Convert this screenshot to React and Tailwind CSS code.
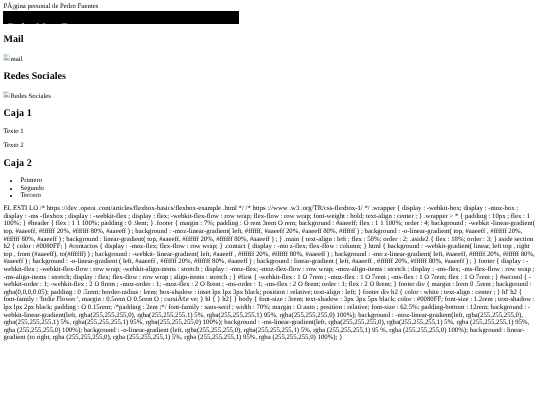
const cssText = `EL ESTI LO /* https ://dev .opera .com/articles/flexbox-basics/flexbox-example .html */ /* https ://www .w3 .org/TR/css-flexbox-1/ */ .wrapper { display : -webkit-box; display : -moz-box ; display : -ms -flexbox ; display : -webkit-flex ; display : flex; -webkit-flex-flow : row wrap; flex-flow : row wrap; font-weight : bold; text-align : center ; } .wrapper > * { padding : 10px ; flex : 1 100%; } #header { flex : 1 1 100%; padding : 0 .9em; } .footer { margin : 7%; padding : O rem 3rem O rem; background : #aaeeff; flex : 1 1 100%; order : 4; background : -webkit -linear-gradient( top, #aaeeff, #ffffff 20%, #ffffff 80%, #aaeeff ) ; background : -moz-linear-gradient( left, #ffffff, #aaeeff 20%, #aaeeff 80%, #ffffff ) ; background : -o-linear-gradient( top, #aaeeff , #ffffff 20%, #ffffff 80%, #aaeeff ) ; background : linear-gradient( top, #aaeeff, #ffffff 20%, #ffffff 80%, #aaeeff ) ; } .main { text-align : left ; flex : 58%; order : 2; .aside2 { flex : 18%; order : 3; } aside section h2 { color : #0080FF; } #contactos { display : -moz-flex; flex-flow : row wrap; } .contact { display : -mo z-flex; flex-flow : column; } html { background : -webkit-gradient( linear, left top , right top , from (#aaeeff), to(#ffffff) ) ; background : -webkit- linear-gradient( left, #aaeeff , #ffffff 20%, #ffffff 80%, #aaeeff ) ; background : -mo z-linear-gradient( left, #aaeeff, #ffffff 20%, #ffffff 80%, #aaeeff ) ; background : -o-linear-gradient ( left, #aaeeff , #ffffff 20%, #ffffff 80%, #aaeeff ) ; background : linear-gradient ( left, #aaeeff , #ffffff 20%, #ffffff 80%, #aaeeff ) ; } footer { display : -webkit-flex ; -webkit-flex-flow : row wrap; -webkit-align-items : stretch ; display : -moz-flex; -moz-flex-flow : row wrap; -moz-align-items : stretch ; display : -ms-flex; -ms-flex-flow : row wrap ; -ms-align-items : stretch; display : flex; flex-flow : row wrap ; align-items : stretch ; } #first { -webkit-flex : 1 O 7rem ; -moz-flex : 1 O 7rem ; -ms-flex : 1 O 7rem; flex : 1 O 7rem ; } #second { -webkit-order : 1; -webkit-flex : 2 O 8rem ; -moz-order : 1; -moz-flex : 2 O 8rem ; -ms-order : 1; -ms-flex : 2 O 8rem; order : 1; flex : 2 O 8rem; } footer div { margin : lrem 0 .5rem ; background : rgba(0,0,0,0.05); padding : 0 .5rem; border-radius : lrem; box-shadow : inset lpx lpx 3px black; position : relative; text-align : left; } footer div h2 { color : white ; text-align : center ; } hl' h2 { font-family : 'Indie Flower ', margin : 0.5rem O 0.5rem O ; cursiÃ¢e ve; } hl { } h2{ } body { font-size : 3rem; text-shadow : 3px 3px 5px black; color : #0080FF; font-size : 1.2rem ; text-shadow : lpx lpx 2px black; padding : O 0.15rem; /*padding : 2em ;*/ font-family : sans-serif ; width : 70%; margin : O auto ; position : relative; font-size : 62.5%; padding-bottom : 12rem; background : -webkit-linear-gradient(left, rgba(255,255,255,0), rgba(255,255,255,1) 5%, rgba(255,255,255,1) 95%, rgba(255,255,255,0) 100%); background : -moz-linear-gradient(left, rgba(255,255,255,0), rgba(255,255,255,1) 5%, rgba(255,255,255,1) 95%, rgba(255,255,255,0) 100%); background : -ms-linear-gradient(left, rgba(255,255,255,0), rgba(255,255,255,1) 5%, rgba (255,255,255,1) 95%, rgba (255,255,255,0) 100%); background : -o-linear-gradient (left, rgba(255,255,255,0), rgba(255,255,255,1) 5%, rgba (255,255,255,1) 95 %, rgba (255,255,255,0) 100%); background : linear-gradient (to right, rgba (255,255,255,0), rgba (255,255,255,1) 5%, rgba (255,255,255,1) 95%, rgba (255,255,255,0) 100%); }`

const BrokenImage = () => (
    <svg width="7" height="7" viewBox="0 0 16 16" className="inline-block align-baseline">
        <path d="M1 1h10l4 4v10H1z" fill="#f4f6fa" stroke="#a3a9b3" strokeWidth="1" />
        <path d="M2 2h8v5H2z" fill="#b9d3f5" />
        <path d="M2 13l4-5 3 3 2-2 3 4z" fill="#6fae55" />
    </svg>
)

const Heading = ({ children }) => (
    <h2 className="text-[10.1px] leading-[11.6px] font-bold my-[8px]">{children}</h2>
)

const App = () => {
    return (
        <div className="min-h-[405px] bg-white text-black text-[6.74px] leading-[7.6px] px-[3.4px] pt-[3.4px] font-['Liberation_Serif',serif] [text-rendering:geometricPrecision] blur-[0.25px]">
            <div>PÃ¡gina personal de Pedro Fuentes</div>
            <div className="w-[236px] h-[13px] bg-black overflow-hidden mb-[10px]">
                <h1 className="text-white text-[10.1px] leading-[11.6px] font-bold pt-[11.4px] pl-[4.6px] opacity-70">
                    Pedro Mata Fuentes
                </h1>
            </div>
            <section>
                <Heading>Mail</Heading>
                <p className="my-[6.75px]">
                    <BrokenImage />
                    mail
                </p>
                <Heading>Redes Sociales</Heading>
                <p className="my-[6.75px]">
                    <BrokenImage />
                    Redes Sociales
                </p>
                <Heading>Caja 1</Heading>
                <p className="my-[6.5px]">Texto 1</p>
                <p className="my-[6.5px]">Texto 2</p>
                <Heading>Caja 2</Heading>
                <ul className="list-disc pl-[17px] mt-[6.5px]">
                    <li>Primero</li>
                    <li>Segundo</li>
                    <li>Tercero</li>
                </ul>
            </section>
            <p className="mt-[5.2px] tracking-[0.015px]">{cssText}</p>
        </div>
    )
}

export default App
